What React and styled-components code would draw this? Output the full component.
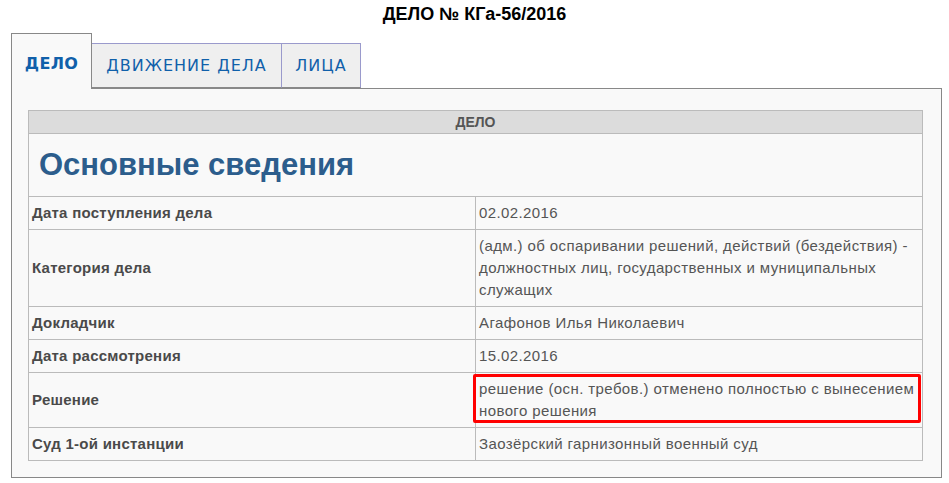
import React from "react";
import styled, { createGlobalStyle } from "styled-components";

const GlobalStyle = createGlobalStyle`
  html, body {
    margin: 0;
    padding: 0;
    background: #fff;
  }
`;

const Page = styled.div`
  width: 949px;
  box-sizing: border-box;
  padding: 0 7px 0 11px;
  font-family: "Liberation Sans", Arial, sans-serif;
`;

const Title = styled.div`
  height: 33px;
  padding-top: 4px;
  box-sizing: border-box;
  margin-left: -11px;
  margin-right: -7px;
  text-align: center;
  font-size: 18px;
  font-weight: bold;
  color: #000;
`;

const TabList = styled.div`
  display: flex;
  align-items: flex-end;
  height: 55px;
  position: relative;
  z-index: 1;
`;

const Tab = styled.div`
  box-sizing: border-box;
  display: flex;
  align-items: center;
  justify-content: center;
  font-family: "DejaVu Sans", Verdana, sans-serif;
  font-size: 16px;
  text-transform: uppercase;
  color: #1060aa;
  cursor: pointer;
  width: ${(p) => p.w}px;
  height: ${(p) => (p.active ? "56px" : "45px")};
  margin-bottom: ${(p) => (p.active ? "-1px" : "0")};
  padding-top: ${(p) => (p.active ? "4px" : "0")};
  letter-spacing: ${(p) => (p.active ? "0.3px" : "1px")};
  background: ${(p) => (p.active ? "#f9f9f9" : "#efefef")};
  font-weight: ${(p) => (p.active ? "bold" : "normal")};
  border: 1px solid ${(p) => (p.active ? "#888" : "#9a9acc")};
  border-bottom: ${(p) => (p.active ? "none" : "1px solid #888")};
  & + & {
    border-left: ${(p) => (p.active ? "1px solid #888" : "none")};
  }
`;

const Panel = styled.div`
  box-sizing: border-box;
  width: 931px;
  border: 1px solid #888;
  background: #f9f9f9;
  padding: 21px 18px 16px 16px;
`;

const Table = styled.table`
  width: 100%;
  border-collapse: collapse;
  table-layout: fixed;
  font-size: 15px;
  color: #555;
`;

const HeadCell = styled.th`
  background: #dcdcdc;
  border: 1px solid #bbb;
  height: 22px;
  padding: 0;
  font-size: 14px;
  font-weight: bold;
  color: #555;
  text-align: center;
`;

const SectionCell = styled.td`
  border: 1px solid #bbb;
  height: 62px;
  padding: 0 10px;
  font-size: 31px;
  font-weight: bold;
  color: #2c5d8c;
`;

const Cell = styled.td`
  border: 1px solid #bbb;
  padding: 5px 3px;
  line-height: 22px;
  vertical-align: middle;
  font-weight: ${(p) => (p.label ? "bold" : "normal")};
  letter-spacing: ${(p) => (p.label ? "0.25px" : "0.4px")};
  color: ${(p) => (p.label ? "#4a4a4a" : "#555")};
  position: ${(p) => (p.marked ? "relative" : "static")};
`;

const Marker = styled.div`
  position: absolute;
  top: 1px;
  left: -3px;
  right: 1px;
  bottom: 4px;
  border: 3px solid #f00;
  border-radius: 2px;
  pointer-events: none;
`;

const tabs = [
  { title: "Дело", w: 81, active: true },
  { title: "Движение дела", w: 190 },
  { title: "Лица", w: 79 },
];

const rows = [
  ["Дата поступления дела", "02.02.2016"],
  [
    "Категория дела",
    "(адм.) об оспаривании решений, действий (бездействия) - должностных лиц, государственных и муниципальных служащих",
  ],
  ["Докладчик", "Агафонов Илья Николаевич"],
  ["Дата рассмотрения", "15.02.2016"],
  ["Решение", "решение (осн. требов.) отменено полностью с вынесением нового решения", true],
  ["Суд 1-ой инстанции", "Заозёрский гарнизонный военный суд"],
];

const App = () => {
  return (
    <Page>
      <GlobalStyle />
      <Title>ДЕЛО № КГа-56/2016</Title>
      <TabList>
        {tabs.map((t) => (
          <Tab key={t.title} active={t.active} w={t.w}>
            {t.title}
          </Tab>
        ))}
      </TabList>
      <Panel>
        <Table>
          <tbody>
            <tr>
              <HeadCell colSpan={2}>ДЕЛО</HeadCell>
            </tr>
            <tr>
              <SectionCell colSpan={2}>Основные сведения</SectionCell>
            </tr>
            {rows.map(([label, value, marked]) => (
              <tr key={label}>
                <Cell label>{label}</Cell>
                <Cell marked={marked}>
                  {marked && <Marker />}
                  {value}
                </Cell>
              </tr>
            ))}
          </tbody>
        </Table>
      </Panel>
    </Page>
  );
};

export default App;
